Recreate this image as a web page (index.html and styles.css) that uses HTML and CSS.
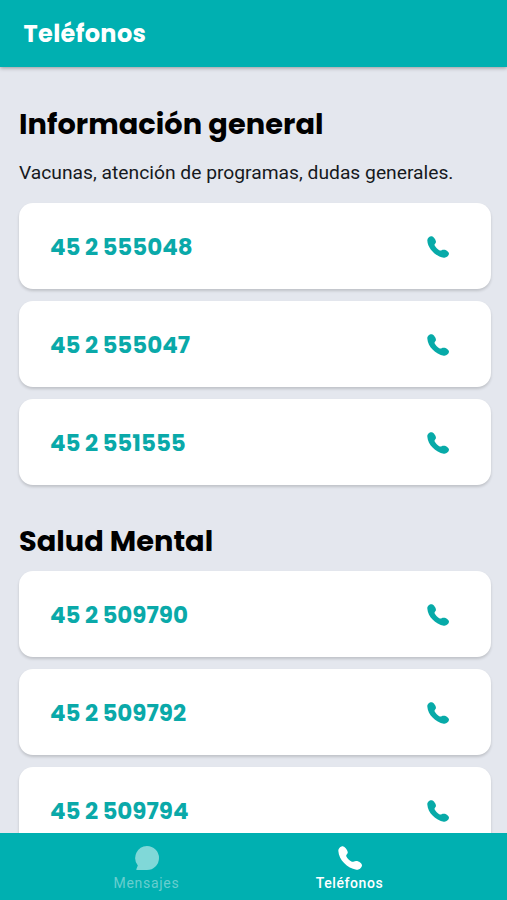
FILE: index.html
```html
<!DOCTYPE html>
<html lang="es">
<head>
    <meta charset="UTF-8">
    <meta name="viewport" content="width=device-width, initial-scale=1.0">
    <title>Teléfonos</title>
    <link rel="stylesheet" href="styles.css">
</head>
<body>
    <svg class="sprite" aria-hidden="true">
        <symbol id="icon-phone" viewBox="0 0 64 64">
            <path d="M1 14C0 6 8 0 14 1C20 2 27 13 26 18C25 22 21 23 22 27C25 33 31 39 37 42C41 43 43 40 48 40C54 39 64 46 64 51C64 57 57 64 49 63C25 60 2 36 1 14Z"/>
        </symbol>
        <symbol id="icon-chat" viewBox="0 0 68 68">
            <path d="M34 0a34 34 0 1 1 0 68H6q-3 0-2-3l4-10A34 34 0 0 1 34 0Z"/>
        </symbol>
    </svg>

    <header class="toolbar">
        <div class="toolbar-title">Teléfonos</div>
    </header>

    <main class="content">
        <section class="group">
            <h2 class="title-general">Información general</h2>
            <p>Vacunas, atención de programas, dudas generales.</p>
            <div class="phone-list">
                <a class="phone-card" href="tel:452555048"><span>45 2 555048</span><svg class="icon"><use href="#icon-phone"/></svg></a>
                <a class="phone-card" href="tel:452555047"><span>45 2 555047</span><svg class="icon"><use href="#icon-phone"/></svg></a>
                <a class="phone-card" href="tel:452551555"><span>45 2 551555</span><svg class="icon"><use href="#icon-phone"/></svg></a>
            </div>
        </section>

        <section class="group">
            <h2>Salud Mental</h2>
            <div class="phone-list">
                <a class="phone-card" href="tel:452509790"><span>45 2 509790</span><svg class="icon"><use href="#icon-phone"/></svg></a>
                <a class="phone-card" href="tel:452509792"><span>45 2 509792</span><svg class="icon"><use href="#icon-phone"/></svg></a>
                <a class="phone-card" href="tel:452509794"><span>45 2 509794</span><svg class="icon"><use href="#icon-phone"/></svg></a>
            </div>
        </section>
    </main>

    <nav class="tabs">
        <a class="tab" href="#mensajes"><svg class="tab-icon"><use href="#icon-chat"/></svg><span>Mensajes</span></a>
        <a class="tab active" href="#telefonos"><svg class="tab-icon"><use href="#icon-phone"/></svg><span>Teléfonos</span></a>
    </nav>
</body>
</html>
```
FILE: styles.css
```css
* {
    box-sizing: border-box;
}
body {
    margin: 0;
    height: 100vh;
    display: flex;
    flex-direction: column;
    overflow: hidden;
    background-color: #e4e7ee;
    color: #000;
    font-family: Roboto, sans-serif;
}
a {
    text-decoration: none;
}
.sprite {
    display: none;
}
.toolbar {
    flex: 0 0 67px;
    display: flex;
    align-items: center;
    padding: 0 23.5px;
    background-color: #00b0b1;
    box-shadow: 0 1px 4px rgba(0,0,0,0.35);
}
.toolbar-title {
    color: white;
    font-family: Poppins, sans-serif;
    font-size: 24px;
    font-weight: 700;
    letter-spacing: 0.35px;
}
.content {
    flex: 1;
    min-height: 0;
    overflow: hidden;
    padding: 37px 16px 0 19px;
}
.group {
    margin-bottom: 36px;
}
h2 {
    margin: 0 0 10px;
    font-family: Poppins, sans-serif;
    font-size: 28.8px;
    line-height: 40px;
    font-weight: 700;
}
p {
    margin: 0 0 17px;
    color: #16191d;
    font-size: 19.25px;
    line-height: 27px;
    white-space: nowrap;
}
.title-general {
    margin-bottom: 15px;
    letter-spacing: 0.05px;
}
.phone-list {
    display: flex;
    flex-direction: column;
    gap: 12px;
}
.phone-card {
    height: 86px;
    padding: 2px 42px 0 31px;
    display: flex;
    align-items: center;
    justify-content: space-between;
    background-color: white;
    border-radius: 14px;
    box-shadow: 0 2px 3px rgba(0,0,0,0.16);
    color: #0aa9a9;
    font-family: Poppins, sans-serif;
    font-size: 23px;
    font-weight: 700;
    word-spacing: -0.5px;
}
.icon {
    width: 22px;
    height: 22px;
    fill: #07aaa8;
}
.tabs {
    flex: 0 0 67px;
    display: flex;
    justify-content: center;
    padding-right: 11px;
    background-color: #00b0b1;
}
.tab {
    width: 203px;
    padding-top: 13px;
    display: flex;
    flex-direction: column;
    align-items: center;
    gap: 4px;
    color: #68cecf;
    fill: #80d8d8;
    font-size: 14px;
    line-height: 18px;
    letter-spacing: 0.7px;
}
.tab.active {
    color: white;
    fill: white;
    font-weight: 500;
    letter-spacing: 0.6px;
}
.tab-icon {
    width: 24px;
    height: 24px;
}
```
